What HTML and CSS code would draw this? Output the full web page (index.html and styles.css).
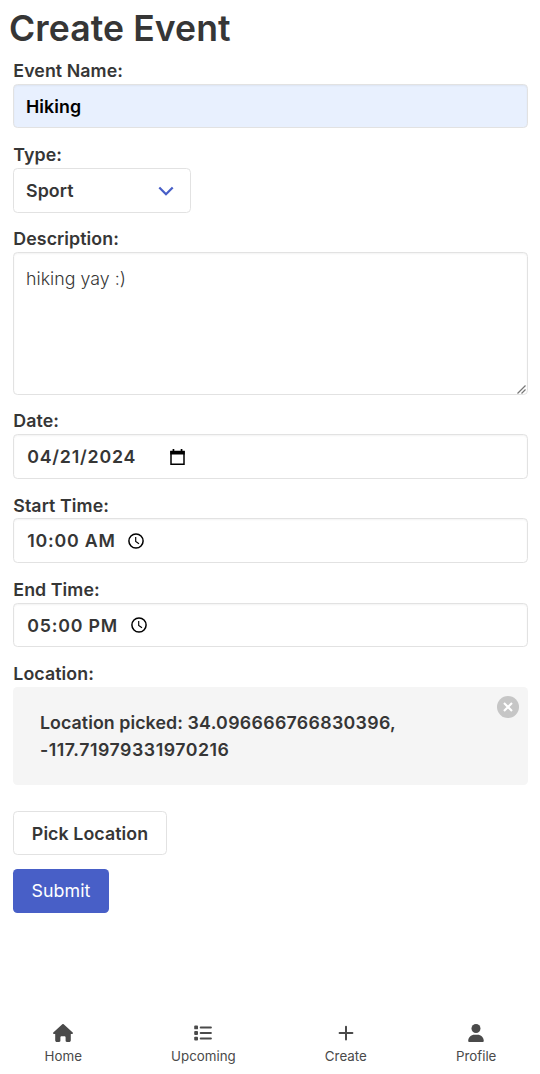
FILE: index.html
```html
<!DOCTYPE html>
<html lang="en">
<head>
<meta charset="utf-8">
<title>Create Event</title>
<link rel="stylesheet" href="styles.css">
</head>
<body>
<main class="page">
  <h1 class="title">Create Event</h1>
  <form class="form">
    <div class="field">
      <label class="label">Event Name:</label>
      <div class="input autofilled">Hiking</div>
    </div>
    <div class="field">
      <label class="label">Type:</label>
      <div class="input select"><span>Sport</span>
        <svg class="chevron" viewBox="0 0 16 10"><path d="M1.3 1.5 8 8.2l6.7-6.7" fill="none" stroke="#485fc7" stroke-width="2.3"/></svg>
      </div>
    </div>
    <div class="field">
      <label class="label">Description:</label>
      <div class="input textarea"><span>hiking yay :)</span>
        <svg class="grip" viewBox="0 0 9 9"><path d="M.5 8.5l8-8M4.5 8.5l4-4" stroke="#777" stroke-width="1.2"/></svg>
      </div>
    </div>
    <div class="field">
      <label class="label">Date:</label>
      <div class="input date"><span class="value">04/21/2024</span>
        <svg class="calendar" viewBox="0 0 15 16"><path d="M1 2.5h13v12.7H1z" fill="none" stroke="#000" stroke-width="1.5"/><path d="M.3 2h14.4v3.4H.3zM2.6 0h1.7v2.5H2.6zM10.7 0h1.7v2.5h-1.7z"/></svg>
      </div>
    </div>
    <div class="field">
      <label class="label">Start Time:</label>
      <div class="input start"><span class="value">10:00 AM</span>
        <svg class="clock" viewBox="0 0 16 16"><circle cx="8" cy="8" r="7.1" fill="none" stroke="#000" stroke-width="1.5"/><path d="M7.7 4v4.4l3.3 2.4" fill="none" stroke="#000" stroke-width="1.15"/></svg>
      </div>
    </div>
    <div class="field">
      <label class="label">End Time:</label>
      <div class="input end"><span class="value">05:00 PM</span>
        <svg class="clock" viewBox="0 0 16 16"><circle cx="8" cy="8" r="7.1" fill="none" stroke="#000" stroke-width="1.5"/><path d="M7.7 4v4.4l3.3 2.4" fill="none" stroke="#000" stroke-width="1.15"/></svg>
      </div>
    </div>
    <div class="location">
      <label class="label">Location:</label>
      <div class="notification">
        <span>Location picked: <span class="latitude">34.096666766830396,</span> <span class="longitude">-117.71979331970216</span></span>
        <svg class="delete" viewBox="0 0 22 22"><circle cx="11" cy="11" r="11" fill="#c6c6c6"/><path d="M7 7l8 8M15 7l-8 8" stroke="#fff" stroke-width="2.1"/></svg>
      </div>
    </div>
    <button class="button pick" type="button">Pick Location</button>
    <button class="button submit" type="button">Submit</button>
  </form>
  <nav class="tabs">
    <a class="tab home">
      <svg class="icon" viewBox="0 0 20 18"><path d="M9.3.3a1 1 0 0 1 1.4 0l9 8.1c.7.7.2 1.6-.7 1.6h-1.2v6.2c0 1-.7 1.8-1.8 1.8h-2.2c-.7 0-1.2-.5-1.2-1.2v-3.3c0-.8-.5-1.3-1.2-1.3H8.6c-.7 0-1.2.5-1.2 1.3v3.3c0 .7-.5 1.2-1.2 1.2H4c-1.1 0-1.8-.8-1.8-1.8V10H1c-.9 0-1.4-.9-.7-1.6z"/></svg>
      <span>Home</span>
    </a>
    <a class="tab upcoming">
      <svg class="icon" viewBox="0 0 20 18"><rect x="1.2" y="1.5" width="3.8" height="3.8" rx=".9"/><rect x="1.2" y="7.1" width="3.8" height="3.8" rx=".9"/><rect x="1.2" y="12.7" width="3.8" height="3.8" rx=".9"/><path d="M7.7 3.4h10.2M7.7 9h10.2M7.7 14.6h10.2" stroke="#4a4a4a" stroke-width="2" stroke-linecap="round"/></svg>
      <span>Upcoming</span>
    </a>
    <a class="tab create">
      <svg class="icon" viewBox="0 0 20 18"><path d="M10 2.7v12.8M3.6 9.1h12.8" stroke="#4a4a4a" stroke-width="2" stroke-linecap="round"/></svg>
      <span>Create</span>
    </a>
    <a class="tab profile">
      <svg class="icon" viewBox="0 0 20 18"><circle cx="10" cy="4.5" r="4.5"/><path d="M2.2 17.1c0-3.7 2.8-6.4 6.3-6.4h3c3.5 0 6.3 2.7 6.3 6.4 0 .5-.4.9-.9.9H3.1c-.5 0-.9-.4-.9-.9z"/></svg>
      <span>Profile</span>
    </a>
  </nav>
</main>
</body>
</html>
```
FILE: styles.css
```css
* { box-sizing: border-box; }
body {
  margin: 0;
  background: #fff;
  color: #363636;
  font: 17.78px/26.67px Inter, sans-serif;
}
svg { display: block; flex: none; }
.page {
  height: 1074px;
  display: flex;
  flex-direction: column;
  overflow: hidden;
}
.title {
  margin: 0;
  padding: 9px 9px 0;
  height: 57.5px;
  font-size: 35.56px;
  line-height: 40px;
  font-weight: 560;
  letter-spacing: .1px;
}
.form {
  display: flex;
  flex-direction: column;
  align-items: flex-start;
  padding: 0 12px 0 13px;
  font-weight: 600;
  letter-spacing: .08px;
}
.field { width: 100%; margin-bottom: 13.2px; }
.label { display: block; height: 26.55px; padding: .6px 0 0 .3px; }
.input {
  position: relative;
  display: flex;
  align-items: center;
  height: 44.44px;
  padding: 2px 12px 0;
  border: 1px solid #e2e2e2;
  border-radius: 4.44px;
  box-shadow: inset 0 1px 2px rgba(10, 10, 10, .05);
}
.autofilled { background: #e8f0fe; color: #000; }
.select { width: 178px; justify-content: space-between; padding-right: 16.5px; box-shadow: none; }
.chevron { width: 16px; height: 10px; margin-top: -1px; }
.textarea {
  height: 142.2px;
  align-items: flex-start;
  padding-top: 12.8px;
  font-weight: 350;
  letter-spacing: .03px;
}
.grip { position: absolute; right: 1px; bottom: 0; width: 9px; height: 9px; }
.value { margin-left: 1.2px; letter-spacing: .8px; white-space: nowrap; }
.date .value { width: 143px; }
.start .value { width: 101px; }
.end .value { width: 103.5px; }
.calendar { width: 15px; height: 16px; margin-top: -1.4px; }
.clock { width: 16px; height: 16px; margin-top: -1.4px; }
.location { width: 100%; margin-bottom: 26.4px; }
.notification {
  position: relative;
  height: 97.8px;
  padding: 23.3px 44px 21px 26.9px;
  border-radius: 4.44px;
  background: #f5f5f5;
}
.latitude { letter-spacing: .32px; }
.longitude { letter-spacing: .53px; }
.delete { position: absolute; top: 9px; right: 9px; width: 22px; height: 22px; }
.button {
  height: 44.44px;
  padding: 1.6px 0 0;
  border: 1px solid #e2e2e2;
  border-radius: 4.44px;
  background: #fff;
  color: #363636;
  font: inherit;
  letter-spacing: .08px;
}
.pick { width: 154px; margin-bottom: 13.3px; }
.submit { width: 96px; padding-top: .8px; border: 0; background: #485fc7; color: #fff; font-weight: 370; }
.tabs {
  display: flex;
  justify-content: space-between;
  margin-top: auto;
  padding: 0 43.6px 8px 44.6px;
  color: #4a4a4a;
  font-size: 13.33px;
  font-weight: 370;
  line-height: 20px;
}
.tab { display: flex; flex-direction: column; align-items: center; gap: 4px; }
.icon { width: 20px; height: 18px; margin-top: -.5px; fill: #4a4a4a; }
```
